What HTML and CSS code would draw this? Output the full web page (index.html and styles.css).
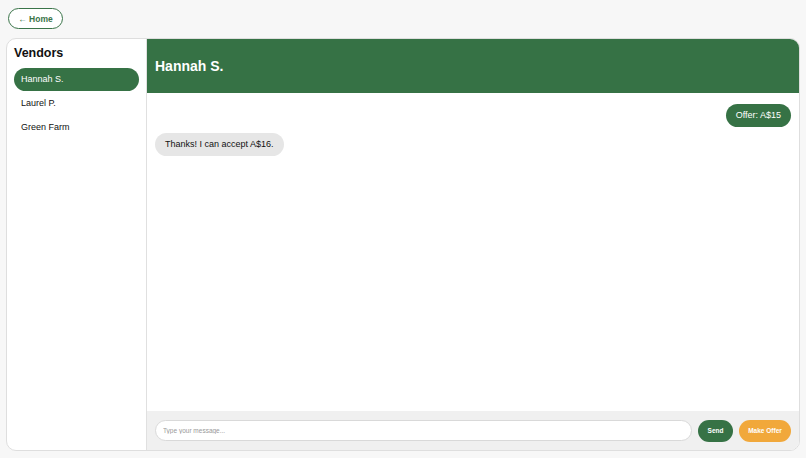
FILE: index.html
```html
<!DOCTYPE html>
<html lang="en">
<head>
<meta charset="utf-8">
<title>Chat</title>
<link rel="stylesheet" href="styles.css">
</head>
<body>
<div class="page">
  <div class="topbar"><button class="home-btn">← Home</button></div>
  <div class="card">
    <aside class="sidebar">
      <h2 class="side-title">Vendors</h2>
      <ul class="vendor-list">
        <li class="vendor active">Hannah S.</li>
        <li class="vendor">Laurel P.</li>
        <li class="vendor">Green Farm</li>
      </ul>
    </aside>
    <section class="chat">
      <header class="chat-head"><h1 class="chat-title">Hannah S.</h1></header>
      <div class="messages">
        <div class="msg sent">Offer: A$15</div>
        <div class="msg recv">Thanks! I can accept A$16.</div>
      </div>
      <footer class="composer">
        <input class="msg-input" type="text" placeholder="Type your message...">
        <button class="btn send">Send</button>
        <button class="btn offer">Make Offer</button>
      </footer>
    </section>
  </div>
</div>
</body>
</html>
```
FILE: styles.css
```css
* { box-sizing: border-box; }
html, body { margin: 0; padding: 0; }
body {
  background: #f7f7f7;
  font-family: "Liberation Sans", Arial, sans-serif;
  color: #111;
  width: 806px;
  height: 458px;
  overflow: hidden;
}
.page {
  padding: 8px 6px 7px 6px;
  display: flex;
  flex-direction: column;
  height: 458px;
}
.topbar { padding-left: 2px; height: 30px; flex: none; }
.home-btn {
  display: block;
  height: 21px;
  width: 55px;
  padding: 0;
  border: 1px solid #3a7449;
  border-radius: 11px;
  background: #fff;
  color: #3a7449;
  font-family: inherit;
  font-weight: bold;
  font-size: 8.5px;
}
.card {
  flex: 1;
  display: flex;
  background: #fff;
  border: 1px solid #dedede;
  border-radius: 10px;
  overflow: hidden;
}
.sidebar {
  width: 140px;
  flex: none;
  border-right: 1px solid #e0e0e0;
  padding: 8px 7px;
}
.side-title {
  margin: 0 0 8px 0;
  font-size: 12.5px;
  font-weight: bold;
  line-height: 13px;
}
.vendor-list { list-style: none; margin: 0; padding: 0; }
.vendor {
  height: 23px;
  line-height: 23px;
  padding-left: 7px;
  font-size: 9px;
  border-radius: 12px;
  margin-bottom: 1px;
  color: #111;
}
.vendor.active { background: #367245; color: #fff; }
.chat { flex: 1; display: flex; flex-direction: column; }
.chat-head {
  height: 54px;
  background: #367245;
  display: flex;
  align-items: center;
  padding-left: 8px;
}
.chat-title {
  margin: 0;
  color: #fff;
  font-size: 14px;
  font-weight: bold;
}
.messages {
  flex: 1;
  padding: 11px 8px;
  display: flex;
  flex-direction: column;
  gap: 6px;
}
.msg {
  height: 23px;
  line-height: 23px;
  padding: 0 10px;
  border-radius: 12px;
  font-size: 9px;
}
.msg.sent { align-self: flex-end; background: #367245; color: #fff; }
.msg.recv { align-self: flex-start; background: #e6e6e6; color: #111; }
.composer {
  height: 39px;
  background: #f0f0f0;
  display: flex;
  align-items: center;
  gap: 6px;
  padding: 0 8px;
}
.msg-input {
  flex: 1;
  height: 21px;
  border: 1px solid #d9d9d9;
  border-radius: 11px;
  background: #fff;
  padding: 0 7px;
  font-family: inherit;
  font-size: 6.5px;
}
.msg-input::placeholder { color: #999; }
.btn {
  height: 22px;
  border: none;
  border-radius: 11px;
  font-family: inherit;
  font-size: 6.5px;
  font-weight: bold;
  color: #fff;
}
.btn.send { width: 35px; background: #367245; }
.btn.offer { width: 52px; background: #f1a83b; }
```
